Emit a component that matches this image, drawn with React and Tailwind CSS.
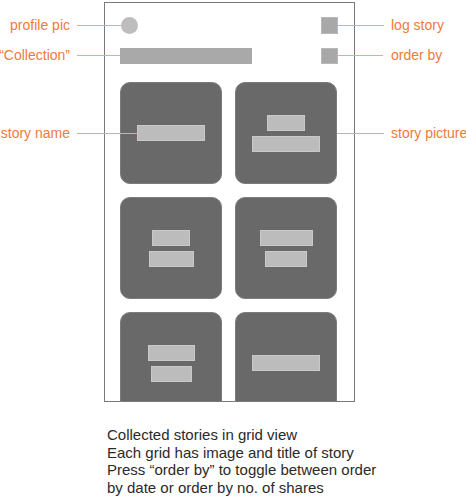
import React from "react";

const cards = [
  [68],
  [38, 68],
  [38, 45],
  [53, 42],
  [47, 41],
  [68],
];

function Bar({ w }) {
  return (
    <div
      className="h-[16px] bg-[#bcbcbc] border border-[#c9c9c9]"
      style={{ width: w }}
    />
  );
}

function Note({ text, y, side, from, to }) {
  // leader line + orange label
  const top = y - 10;
  return (
    <>
      <div
        className="absolute h-px bg-[#f5a57c]"
        style={{ top: y, left: from, width: to - from }}
      />
      {side === "left" ? (
        <div
          className="absolute right-[396px] text-[14px] leading-[20px] text-[#f07a3a] whitespace-nowrap"
          style={{ top }}
        >
          {text}
        </div>
      ) : (
        <div
          className="absolute left-[391px] text-[14px] leading-[20px] text-[#f07a3a] whitespace-nowrap"
          style={{ top }}
        >
          {text}
        </div>
      )}
    </>
  );
}

export default function App() {
  return (
    <div
      className="relative w-[466px] h-[498px] bg-white overflow-hidden"
      style={{ fontFamily: '"Liberation Sans", Arial, sans-serif' }}
    >
      <div className="pl-[104px] pt-[2px]">
        {/* phone frame */}
        <div className="w-[251px] h-[400px] border border-[#7a7a7a] overflow-hidden">
          <div className="flex justify-between items-center mt-[14px] pl-[16px] pr-[16px]">
            <div className="w-[17px] h-[17px] rounded-full bg-[#bdbdbd]" />
            <div className="w-[17px] h-[17px] bg-[#a8a8a8] border border-[#b8b8b8]" />
          </div>
          <div className="flex justify-between items-center mt-[14px] pl-[15px] pr-[16px]">
            <div className="w-[132px] h-[16px] bg-[#a9a9a9]" />
            <div className="w-[17px] h-[16px] bg-[#a8a8a8] border border-[#b8b8b8]" />
          </div>
          <div className="grid grid-cols-[102px_102px] gap-[13px] mt-[18px] pl-[15px]">
            {cards.map((bars, i) => (
              <div
                key={i}
                className="w-[102px] h-[102px] rounded-[10px] bg-[#696969] border border-[#7c7c7c] flex flex-col items-center justify-center gap-[5px]"
              >
                {bars.map((w, j) => (
                  <Bar key={j} w={w} />
                ))}
              </div>
            ))}
          </div>
        </div>
      </div>

      <div className="mt-[24px] pl-[107px] text-[15px] leading-[17.5px] text-[#2a2a2a]">
        <p>Collected stories in grid view</p>
        <p>Each grid has image and title of story</p>
        <p>Press “order by” to toggle between order</p>
        <p>by date or order by no. of shares</p>
      </div>

      <Note text="profile pic" y={25} side="left" from={77} to={121} />
      <Note text="“Collection”" y={55} side="left" from={77} to={120} />
      <Note text="story name" y={133} side="left" from={77} to={138} />
      <Note text="log story" y={25} side="right" from={337} to={384} />
      <Note text="order by" y={55} side="right" from={337} to={383} />
      <Note text="story picture" y={133} side="right" from={337} to={384} />
    </div>
  );
}
